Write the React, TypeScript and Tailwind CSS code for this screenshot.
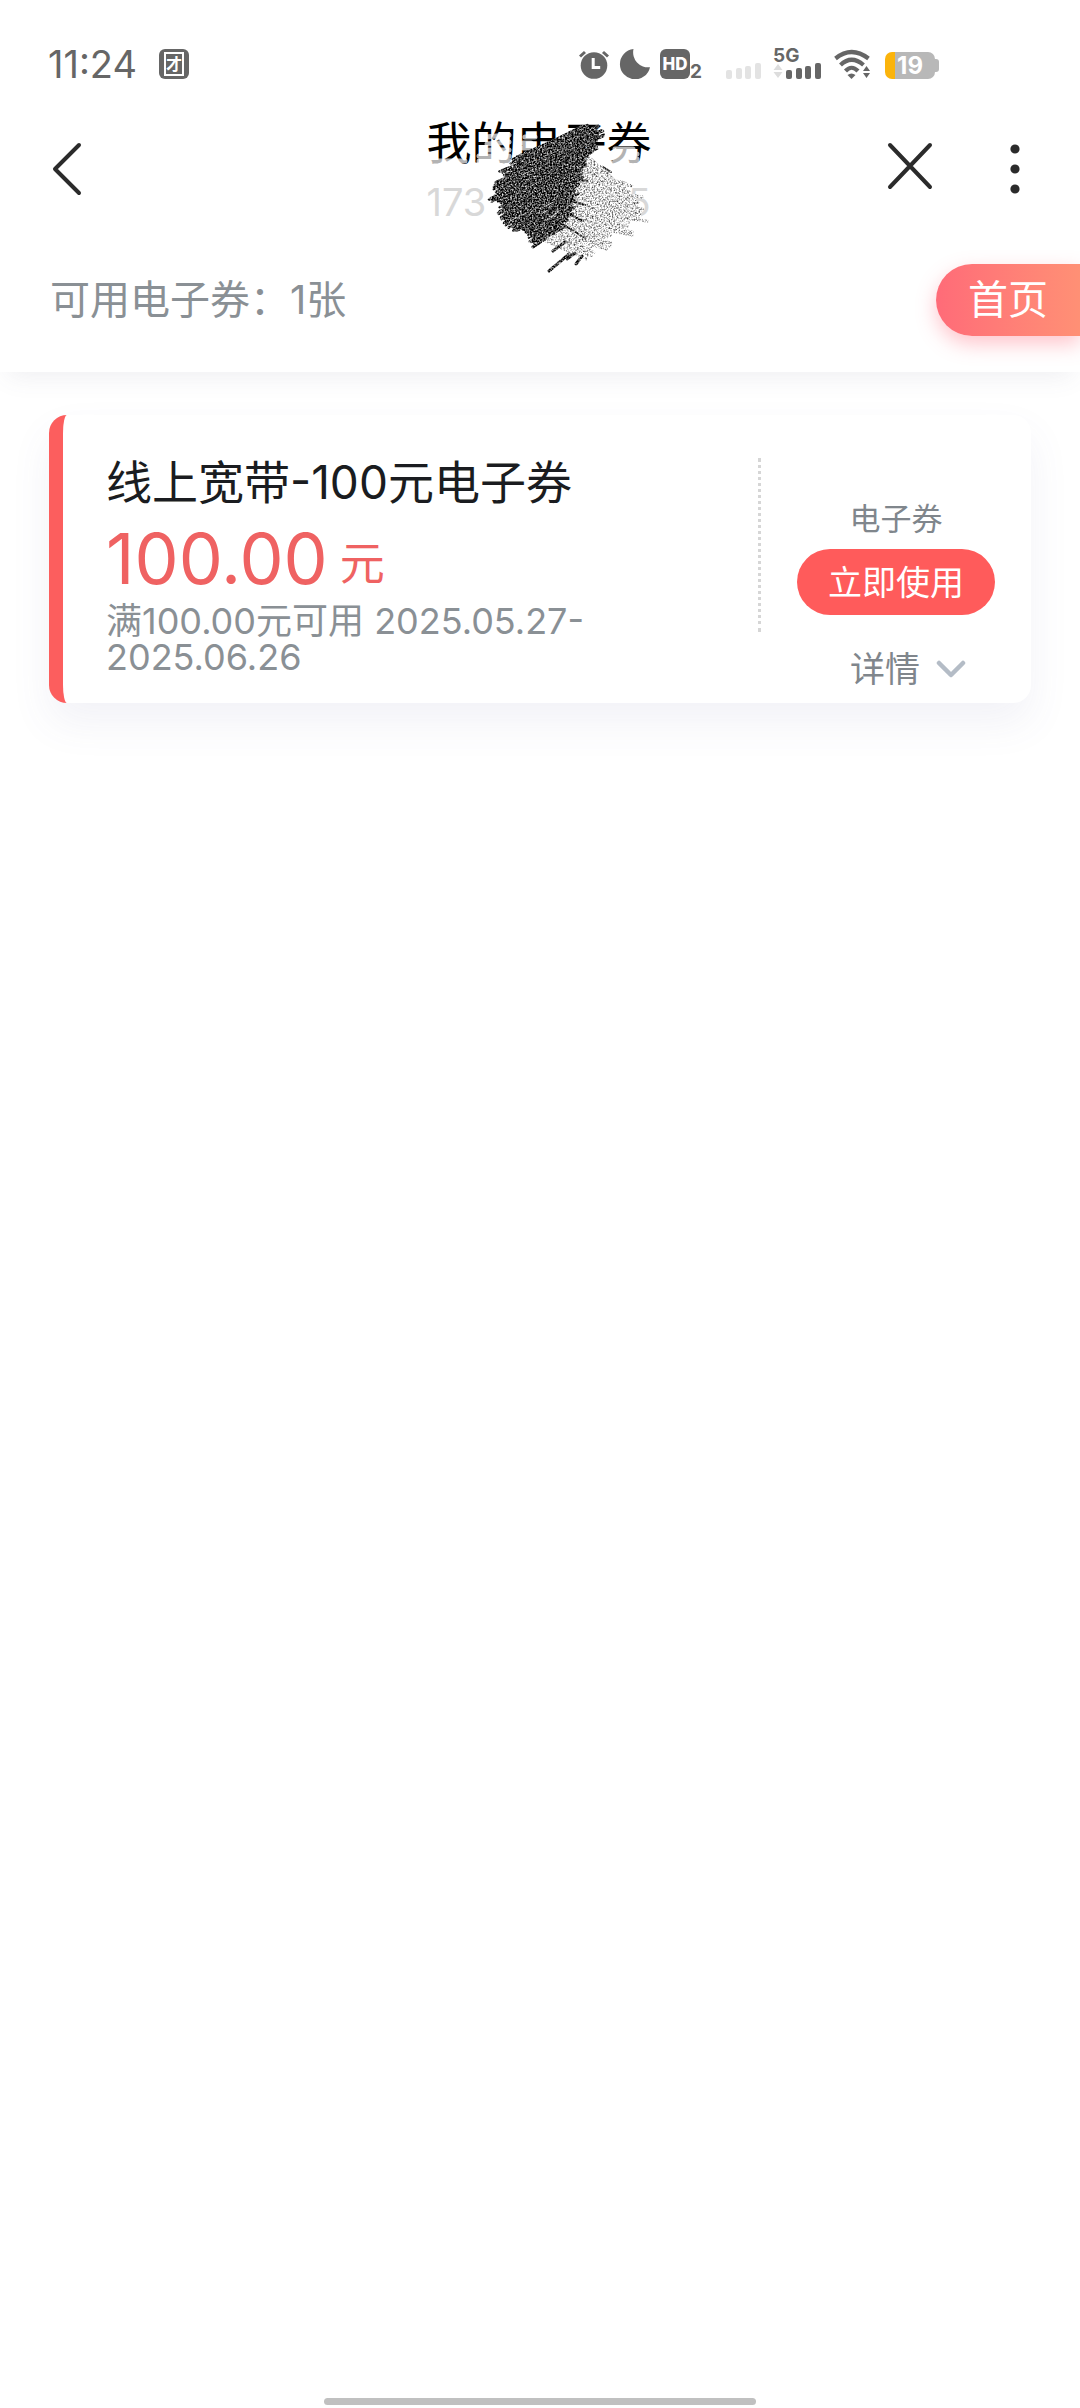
import { useMemo } from 'react'

interface Coupon {
  id: string
  title: string
  amount: string
  unit: string
  condition: string
  validity: string
  kind: string
}

const coupons: Coupon[] = [
  {
    id: 'c1',
    title: '线上宽带-100元电子券',
    amount: '100.00',
    unit: '元',
    condition: '满100.00元可用',
    validity: '2025.05.27-2025.06.26',
    kind: '电子券',
  },
]

const bars = [
  { x: 0, h: 9 },
  { x: 10, h: 11 },
  { x: 19, h: 13 },
  { x: 29, h: 16 },
]

function SignalBars({ className }: { className: string }) {
  return (
    <svg viewBox="0 0 35 16" className={className} fill="currentColor" aria-hidden="true">
      {bars.map(b => (
        <rect key={b.x} x={b.x} y={16 - b.h} width="6" height={b.h} rx="2" />
      ))}
    </svg>
  )
}

function StatusBar() {
  return (
    <div className="flex items-center justify-between pt-[49px] pl-12 pr-[141px] text-[#666]">
      <div className="flex h-[30px] items-center gap-[22px]">
        <time className="text-[38px] leading-[30px]">11:24</time>
        <svg viewBox="0 0 30 30" className="size-[30px]" aria-hidden="true">
          <rect width="30" height="30" rx="6" fill="currentColor" />
          <rect x="6" y="4" width="18" height="22" fill="none" stroke="#fff" strokeWidth="2" />
          <text x="15" y="21" textAnchor="middle" fontSize="16" fontWeight="700" fill="#fff">才</text>
        </svg>
      </div>

      <div className="flex h-[30px] items-end">
        {/* Alarm */}
        <svg viewBox="0 0 30 30" className="mr-[10px] size-[30px]" aria-hidden="true">
          <circle cx="15" cy="16.5" r="13.3" fill="currentColor" />
          <path d="M1 7.5 6 3M29 7.5 24 3" stroke="currentColor" strokeWidth="3" />
          <path d="M14.2 9v9.5h7" stroke="#fff" strokeWidth="3" fill="none" />
        </svg>
        {/* Moon */}
        <svg viewBox="0 0 31 30" className="mr-[10px] h-[30px] w-[31px]" aria-hidden="true">
          <path d="M14.5 0A15.2 15.2 0 1 0 31 18.2A15 15 0 0 1 14.5 0Z" fill="currentColor" />
        </svg>
        <span className="flex size-[30px] items-center justify-center rounded-[6px] bg-[#666] text-[17px] leading-none font-extrabold text-white">HD</span>
        <span className="mr-[24px] w-[12px] text-[19px] leading-[14px] font-bold">2</span>
        <SignalBars className="mr-[12px] h-[16px] w-[35px] text-[#e3e3e3]" />
        <div className="mr-[13px] flex h-[30px] w-[48px] flex-col">
          <span className="h-[14px] text-[19px] leading-[14px] font-bold">5G</span>
          <div className="flex items-end gap-[3px]">
            <svg viewBox="0 0 10 16" className="h-[16px] w-[10px] text-[#ddd]" fill="currentColor" aria-hidden="true">
              <path d="M5 1l4.5 6h-9zM5 15l4.5-6h-9z" />
            </svg>
            <SignalBars className="h-[16px] w-[35px]" />
          </div>
        </div>
        {/* Wifi with traffic arrows */}
        <svg viewBox="0 0 37 30" className="mr-[14px] h-[30px] w-[37px]" aria-hidden="true">
          <g fill="none" stroke="currentColor" strokeWidth="4.2">
            <path d="M1.5 9.5Q17.5-3.5 34.5 9.5" />
            <path d="M6.5 16Q17.5 5.5 29.5 16" />
            <path d="M11.5 22Q17.5 15.5 24 22" />
          </g>
          <path d="M13.5 26q4-3 8 0l-4 4z" fill="currentColor" />
          <path d="M32.5 17l3.5 5h-7zM32.5 29l3.5-5h-7z" fill="currentColor" />
        </svg>
        {/* Battery */}
        <div className="flex h-[27px] items-center">
          <span className="flex h-[27px] w-[50px] items-center justify-center rounded-[7px] bg-linear-to-r from-[#fbb40c] from-20% to-[#b8b8b8] to-20% text-[24px] leading-none font-bold text-white">19</span>
          <span className="h-[13px] w-[4px] rounded-r-[3px] bg-[#b8b8b8]" />
        </div>
      </div>
    </div>
  )
}

// Small seeded generator so the pencil strokes stay the same on every render
function makeRandom(seed: number) {
  let s = seed
  return () => {
    s = (s * 16807) % 2147483647
    return s / 2147483647
  }
}

// [x1, y1, x2, y2] along the edges of each pencil patch
const darkRails = [
  [124, 54, 186, 25],
  [104, 72, 206, 30],
  [94, 92, 192, 50],
  [100, 106, 182, 64],
  [106, 118, 176, 80],
  [118, 128, 172, 96],
  [134, 134, 168, 112],
  [134, 144, 162, 128],
]

const lightRails = [
  [180, 58, 206, 66],
  [178, 72, 228, 82],
  [172, 86, 240, 96],
  [162, 98, 244, 108],
  [160, 108, 230, 122],
  [150, 120, 210, 136],
  [150, 128, 188, 146],
]

function Scribble() {
  const { dark, light } = useMemo(() => {
    const rnd = makeRandom(173)
    const jitter = (n: number) => (rnd() - 0.5) * n
    const dark: string[] = []
    for (let i = 0; i < 100; i++) {
      const t = (i / 100) * (darkRails.length - 1)
      const a = darkRails[Math.floor(t)]
      const b = darkRails[Math.floor(t) + 1]
      const f = t % 1
      const p = a.map((v, k) => v + (b[k] - v) * f)
      dark.push(`M${p[0] + jitter(12)} ${p[1] + jitter(6)}L${p[2] + jitter(12)} ${p[3] + jitter(6)}`)
    }
    const light: string[] = []
    for (let i = 0; i < 46; i++) {
      const f = i / 46
      const x = 185 - 38 * f
      const y = 55 + 68 * f
      light.push(`M${x + jitter(14)} ${y + jitter(4)}L${x + 46 + jitter(14)} ${y + 31 + jitter(6)}`)
    }
    for (const r of lightRails) {
      for (let i = 0; i < 5; i++) {
        light.push(`M${r[0] + jitter(8)} ${r[1] + i * 3}L${r[2] + jitter(10)} ${r[3] + i * 3}`)
      }
    }
    return { dark: dark.join(''), light: light.join('') }
  }, [])

  return (
    <svg
      viewBox="0 0 290 190"
      className="pointer-events-none absolute -top-[6px] left-1/2 h-[190px] w-[290px] -translate-x-[140px]"
      fill="none"
      strokeLinecap="round"
      aria-hidden="true"
    >
      <defs>
        <filter id="grain-dark" x="0" y="0" width="290" height="190" filterUnits="userSpaceOnUse" colorInterpolationFilters="sRGB">
          <feTurbulence type="fractalNoise" baseFrequency="0.6" numOctaves="2" seed="4" />
          <feColorMatrix values="2 0 0 0 -0.74  2 0 0 0 -0.74  2 0 0 0 -0.74  0 0 0 0 1" />
          <feComposite in2="SourceGraphic" operator="in" />
        </filter>
        <filter id="grain-light" x="0" y="0" width="290" height="190" filterUnits="userSpaceOnUse" colorInterpolationFilters="sRGB">
          <feTurbulence type="fractalNoise" baseFrequency="0.6" numOctaves="2" seed="9" />
          <feColorMatrix values="1.8 0 0 0 -0.06  1.8 0 0 0 -0.06  1.8 0 0 0 -0.06  0 0 0 0 1" />
          <feComposite in2="SourceGraphic" operator="in" />
        </filter>
      </defs>
      {/* Eraser marks over the title */}
      <g stroke="#fff" strokeOpacity="0.7" strokeWidth="5">
        <path d="M86 36l24-2M88 43l22-2M84 49l26 0M80 55l30 0M80 60l32 0M34 60h32" />
        <path d="M126 36l10 0M124 42l8 0M124 47l10 0" />
        <path d="M216 48l18 0M214 53l24 0M216 58l22 0M212 62l28 0" />
      </g>
      <g filter="url(#grain-light)">
        <path d={light} stroke="#000" strokeWidth="3" />
      </g>
      <g filter="url(#grain-dark)">
        <path d={dark} stroke="#000" strokeWidth="2.4" />
        <path d="M150 170l20-17M168 158l8-6M177 163l6-8M154 150l12-9M134 146l12-8" stroke="#000" strokeWidth="3" />
        <path d="M172 100l14 4M168 112l16 8M176 78l12 2M204 66l8 5M162 122l24 15" stroke="#000" strokeWidth="2" />
      </g>
    </svg>
  )
}

function NavBar() {
  return (
    <div className="grid h-[179px] grid-cols-[1fr_auto_1fr] items-center pl-12 pr-[51px] text-[#2b2b2b]">
      <button type="button" aria-label="返回" className="w-fit">
        <svg viewBox="0 0 38 56" className="h-[56px] w-[38px]" fill="none" stroke="currentColor" strokeWidth="4" strokeLinecap="round" strokeLinejoin="round">
          <path d="M31 4 7 28l24 24" />
        </svg>
      </button>

      <div className="relative w-[224px] pt-2">
        <h1 className="text-center text-[45px] leading-[58px] whitespace-nowrap text-black">我的电子券</h1>
        <p className="flex justify-between text-[38px] leading-[58px] text-[#d8d8d8]">
          <span>173</span>
          <span>5</span>
        </p>
        <Scribble />
      </div>

      <div className="flex items-center justify-end gap-[66px]">
        <button type="button" aria-label="关闭">
          <svg viewBox="0 0 50 56" className="h-[56px] w-[50px]" fill="none" stroke="currentColor" strokeWidth="4" strokeLinecap="round">
            <path d="M5 4l40 42M45 4 5 46" />
          </svg>
        </button>
        <button type="button" aria-label="更多">
          <svg viewBox="0 0 28 56" className="h-[56px] w-[28px]" fill="currentColor">
            <circle cx="14" cy="8" r="4.6" />
            <circle cx="14" cy="28" r="4.6" />
            <circle cx="14" cy="48" r="4.6" />
          </svg>
        </button>
      </div>
    </div>
  )
}

function CouponCard({ coupon }: { coupon: Coupon }) {
  return (
    <article className="flex rounded-[18px] border-l-[14px] border-[#fc5e5e] bg-white shadow-[0_20px_40px_rgba(90,90,150,0.08)]">
      <div className="min-w-0 flex-1 pt-[42px] pb-7 pl-[43px] pr-[120px]">
        <h2 className="text-[46px] leading-[50px] text-[#1a1c20]">{coupon.title}</h2>
        <p className="mt-2 flex items-end gap-3 text-[#ef6262]">
          <span className="text-[70px] leading-[88px]">{coupon.amount}</span>
          <span className="pb-3.5 text-[45px] leading-[50px]">{coupon.unit}</span>
        </p>
        <p className="text-[36px] leading-[36px] text-[#8a9095]">
          {coupon.condition} {coupon.validity}
        </p>
      </div>

      <div className="my-[43px] h-[174px] w-0 border-l-[3px] border-dotted border-[#d6d6d6]" />

      <div className="flex w-[270px] flex-col items-center pt-[84px]">
        <span className="text-[31px] leading-[40px] text-[#80868c]">{coupon.kind}</span>
        <button type="button" className="mt-[10px] h-[66px] w-[198px] rounded-full bg-[#ff5b5b] text-[34px] text-white">
          立即使用
        </button>
        <button type="button" className="mt-8 flex items-center gap-4 pl-6 text-[35px] leading-[44px] text-[#80868c]">
          详情
          <svg viewBox="0 0 30 18" className="h-[18px] w-[30px] text-[#b4bcc6]" fill="none" stroke="currentColor" strokeWidth="4.5" strokeLinecap="round" strokeLinejoin="round" aria-hidden="true">
            <path d="M3 3l12 12L27 3" />
          </svg>
        </button>
      </div>
    </article>
  )
}

export default function App() {
  return (
    <div className="flex min-h-screen flex-col overflow-x-hidden bg-white font-[Inter,'Noto_Sans_CJK_SC',sans-serif]">
      <header className="bg-white pb-[30px] shadow-[0_12px_24px_-8px_rgba(90,90,120,0.1)]">
        <StatusBar />
        <NavBar />
        <div className="flex h-[84px] items-center justify-between pl-[50px]">
          <p className="text-[40px] text-[#8a9095]">可用电子券：1张</p>
          <a
            href="#home"
            className="flex h-[72px] w-[144px] items-center rounded-l-full bg-linear-to-r from-[#ff6b78] to-[#ff9075] pl-8 text-[40px] text-white shadow-[0_8px_20px_rgba(255,90,110,0.35)]"
          >
            首页
          </a>
        </div>
      </header>

      <main className="flex-1 px-[49px] pt-[43px]">
        {coupons.map(c => (
          <CouponCard key={c.id} coupon={c} />
        ))}
      </main>

      <div className="mx-auto mb-[3px] h-[7px] w-2/5 rounded-full bg-[#c0c0c0]" />
    </div>
  )
}
